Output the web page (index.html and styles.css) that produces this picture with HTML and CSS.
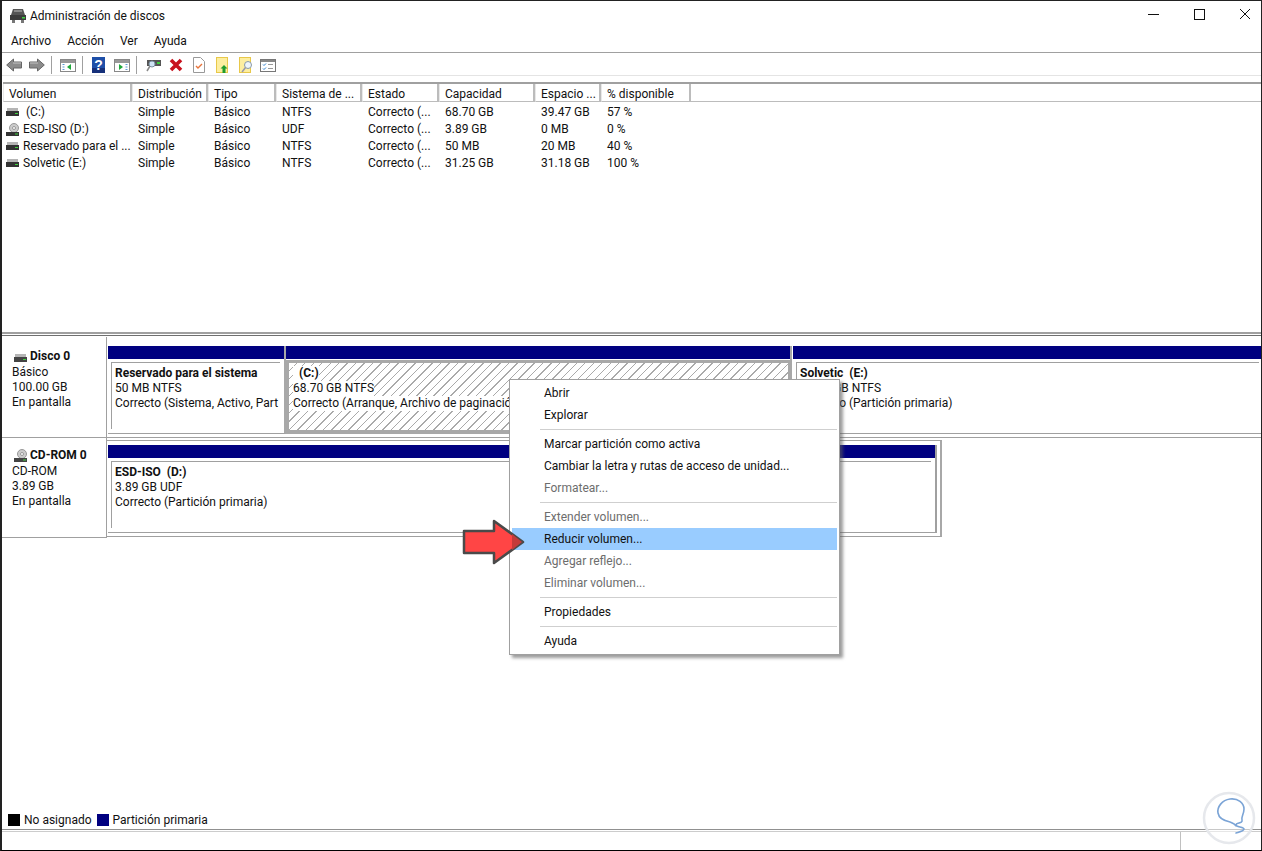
FILE: index.html

```html
<!DOCTYPE html>
<html>
<head>
  <title>Administración de discos</title>
  <link rel="stylesheet" href="styles.css">
</head>
<body>
  <div class="window">
    <div class="titlebar">
      <svg class="appicon" width="18" height="16" viewBox="0 0 18 16">
        <path d="M4 1h10l2 6H2z" fill="#555"/>
        <rect x="5" y="2" width="8" height="2" fill="#8a8a8a"/>
        <rect x="1" y="7" width="16" height="5" fill="#3c3c3c"/>
        <rect x="13" y="9" width="3" height="1.5" fill="#3fd03f"/>
        <rect x="3" y="12" width="3" height="3" fill="#777"/>
        <rect x="12" y="12" width="3" height="3" fill="#777"/>
      </svg>
      <span class="title">Administración de discos</span>
      <div class="controls">
        <svg width="46" height="29" viewBox="0 0 46 29"><path d="M25 13.500h11" stroke="#111" fill="none"/></svg>
        <svg width="46" height="29" viewBox="0 0 46 29"><rect x="25.500" y="8.500" width="10" height="10" stroke="#111" fill="none"/></svg>
        <svg width="46" height="29" viewBox="0 0 46 29"><path d="M25 8l10 10M35 8L25 18" stroke="#111" fill="none"/></svg>
      </div>
    </div>

    <div class="menubar">
      <span>Archivo</span>
      <span>Acción</span>
      <span>Ver</span>
      <span>Ayuda</span>
    </div>

    <div class="toolbar">
      <svg class="tool m7" width="16" height="14" viewBox="0 0 16 14"><path d="M7.500 1L.7 7l6.800 6v-3h8V4h-8z" fill="#8c8c8c" stroke="#666"/><path d="M7 5h8" stroke="#c4c4c4"/></svg>
      <svg class="tool m6" width="16" height="14" viewBox="0 0 16 14"><path d="M8.500 1l6.800 6-6.800 6v-3h-8V4h8z" fill="#8c8c8c" stroke="#666"/><path d="M1 5h8" stroke="#c4c4c4"/></svg>
      <i class="tsep m8"></i>
      <svg class="tool m6" width="16" height="13" viewBox="0 0 16 13"><rect x=".5" y=".5" width="15" height="12" fill="#fff" stroke="#888"/><rect x="1" y="1" width="14" height="3" fill="#999"/><path d="M11 5v6L7 8z" fill="#1ea83c"/><path d="M2.500 5.500h2M2.500 8h2M2.500 10.500h2" stroke="#5a9bd5"/></svg>
      <i class="tsep m9"></i>
      <svg class="tool m9" width="13" height="16" viewBox="0 0 13 16"><rect width="13" height="16" fill="#1e4fa8"/><rect y="11" width="13" height="5" fill="#16307a"/><text x="6.500" y="13" class="qmark">?</text></svg>
      <svg class="tool m6" width="16" height="13" viewBox="0 0 16 13"><rect x=".5" y=".5" width="15" height="12" fill="#fff" stroke="#888"/><rect x="1" y="1" width="14" height="3" fill="#999"/><path d="M5 5v6l4-3z" fill="#1ea83c"/><path d="M11.500 5.500h2M11.500 8h2M11.500 10.500h2" stroke="#5a9bd5"/></svg>
      <i class="tsep m9"></i>
      <svg class="tool m8" width="15" height="14" viewBox="0 0 15 14"><rect x="1" y="2" width="14" height="6" fill="#555"/><rect x="11" y="4" width="3" height="2" fill="#3fd03f"/><circle cx="6" cy="6" r="3" fill="#cfe4f5" stroke="#7a8fa0"/><path d="M4 8l-3 5" stroke="#888" stroke-width="1.500"/></svg>
      <svg class="tool m10" width="14" height="14" viewBox="0 0 14 14"><path d="M2 2l10 10M12 2L2 12" stroke="#c8101c" stroke-width="3.600"/></svg>
      <svg class="tool m11" width="12" height="16" viewBox="0 0 12 16"><path d="M.5.500h7l4 4v11H.5z" fill="#fff" stroke="#999"/><path d="M3 9l2 2 4-4" stroke="#e8743b" stroke-width="1.400" fill="none"/></svg>
      <svg class="tool m11" width="12" height="16" viewBox="0 0 12 16"><rect x=".5" y=".5" width="11" height="15" fill="#fdeea0" stroke="#e8c84a"/><path d="M8 8l3.500 3.500H9.500V16h-3v-4.500h-2z" fill="#1f9c2e"/></svg>
      <svg class="tool m7" width="14" height="16" viewBox="0 0 14 16"><rect x=".5" y=".5" width="11" height="15" fill="#fdeea0" stroke="#e8c84a"/><circle cx="9" cy="8" r="3.500" fill="#eef5fb" stroke="#8899a8"/><path d="M6.500 10.500L3 15" stroke="#99a" stroke-width="1.500"/></svg>
      <svg class="tool" width="16" height="13" viewBox="0 0 16 13"><rect x=".5" y=".5" width="15" height="12" fill="#fff" stroke="#777"/><rect x="1" y="1" width="14" height="2" fill="#888"/><path d="M3 5.500l1 1 2-2M3 9.500l1 1 2-2" stroke="#2a7fd0" fill="none"/><path d="M8 5.500h5M8 9.500h5" stroke="#999"/></svg>
    </div>

    <div class="listpane">
      <div class="listhead">
        <span class="c1">Volumen</span>
        <span class="c2">Distribución</span>
        <span class="c3">Tipo</span>
        <span class="c4">Sistema de ...</span>
        <span class="c5">Estado</span>
        <span class="c6">Capacidad</span>
        <span class="c7">Espacio ...</span>
        <span class="c8">% disponible</span>
      </div>
      <div class="row">
        <span class="c1"><svg class="vol" width="13" height="14" viewBox="0 0 13 14"><rect x="1" y="2" width="11" height="3" fill="#b5b5b5"/><rect y="5" width="13" height="5" fill="#333"/><rect x="9" y="7" width="3" height="1" fill="#3fd03f"/></svg>&nbsp;(C:)</span>
        <span class="c2">Simple</span><span class="c3">Básico</span><span class="c4">NTFS</span><span class="c5">Correcto (...</span><span class="c6">68.70 GB</span><span class="c7">39.47 GB</span><span class="c8">57 %</span>
      </div>
      <div class="row">
        <span class="c1"><svg class="vol" width="13" height="14" viewBox="0 0 13 14"><circle cx="8" cy="5" r="4.500" fill="#ccc" stroke="#999"/><circle cx="8" cy="5" r="1.500" fill="#fff" stroke="#999"/><rect y="9" width="13" height="4" fill="#333"/><rect x="9" y="10.500" width="3" height="1" fill="#3fd03f"/></svg>ESD-ISO (D:)</span>
        <span class="c2">Simple</span><span class="c3">Básico</span><span class="c4">UDF</span><span class="c5">Correcto (...</span><span class="c6">3.89 GB</span><span class="c7">0 MB</span><span class="c8">0 %</span>
      </div>
      <div class="row">
        <span class="c1"><svg class="vol" width="13" height="14" viewBox="0 0 13 14"><rect x="1" y="2" width="11" height="3" fill="#b5b5b5"/><rect y="5" width="13" height="5" fill="#333"/><rect x="9" y="7" width="3" height="1" fill="#3fd03f"/></svg>Reservado para el ...</span>
        <span class="c2">Simple</span><span class="c3">Básico</span><span class="c4">NTFS</span><span class="c5">Correcto (...</span><span class="c6">50 MB</span><span class="c7">20 MB</span><span class="c8">40 %</span>
      </div>
      <div class="row">
        <span class="c1"><svg class="vol" width="13" height="14" viewBox="0 0 13 14"><rect x="1" y="2" width="11" height="3" fill="#b5b5b5"/><rect y="5" width="13" height="5" fill="#333"/><rect x="9" y="7" width="3" height="1" fill="#3fd03f"/></svg>Solvetic (E:)</span>
        <span class="c2">Simple</span><span class="c3">Básico</span><span class="c4">NTFS</span><span class="c5">Correcto (...</span><span class="c6">31.25 GB</span><span class="c7">31.18 GB</span><span class="c8">100 %</span>
      </div>
    </div>

    <div class="splitter"></div>

    <div class="diskpane">
      <div class="disk">
        <div class="disklabel">
          <b class="diskname"><svg width="18" height="10" viewBox="0 0 18 10"><rect x="3" y="0" width="11" height="3" fill="#b5b5b5"/><rect x="2" y="3" width="13" height="5" fill="#444"/><rect x="11" y="5" width="3" height="1" fill="#3fd03f"/></svg>Disco 0</b>
          <div>Básico</div>
          <div>100.00 GB</div>
          <div>En pantalla</div>
        </div>
        <div class="parts">
          <div class="part p-res">
            <div class="bar"></div>
            <div class="pbody">
              <b>Reservado para el sistema</b>
              <div>50 MB NTFS</div>
              <div>Correcto (Sistema, Activo, Part</div>
            </div>
          </div>
          <div class="part p-c">
            <div class="bar"></div>
            <div class="pbody hatch">
              <b>&nbsp;(C:)</b>
              <div>68.70 GB NTFS</div>
              <div>Correcto (Arranque, Archivo de paginación, Volcado, Partición primaria)</div>
            </div>
          </div>
          <div class="part p-e">
            <div class="bar"></div>
            <div class="pbody">
              <b>Solvetic&nbsp; (E:)</b>
              <div>31.25 GB NTFS</div>
              <div>Correcto (Partición primaria)</div>
            </div>
          </div>
        </div>
      </div>
      <div class="disk">
        <div class="disklabel">
          <b class="diskname"><svg width="18" height="14" viewBox="0 0 18 14"><circle cx="10" cy="5" r="4.500" fill="#ccc" stroke="#999"/><circle cx="10" cy="5" r="1.500" fill="#fff" stroke="#999"/><rect x="2" y="9" width="13" height="4" fill="#444"/><rect x="11" y="10.500" width="3" height="1" fill="#3fd03f"/></svg>CD-ROM 0</b>
          <div>CD-ROM</div>
          <div>3.89 GB</div>
          <div>En pantalla</div>
        </div>
        <div class="parts cdparts">
          <div class="part p-d">
            <div class="bar"></div>
            <div class="pbody">
              <b>ESD-ISO&nbsp; (D:)</b>
              <div>3.89 GB UDF</div>
              <div>Correcto (Partición primaria)</div>
            </div>
          </div>
        </div>
      </div>
    </div>

    <div class="legend">
      <i class="swatch black"></i><span>No asignado</span>
      <i class="swatch navy"></i><span>Partición primaria</span>
    </div>

    <div class="statusbar"><i class="statusdiv"></i></div>

    <div class="ctxmenu">
      <div class="mi">Abrir</div>
      <div class="mi">Explorar</div>
      <div class="msep"></div>
      <div class="mi">Marcar partición como activa</div>
      <div class="mi">Cambiar la letra y rutas de acceso de unidad...</div>
      <div class="mi off">Formatear...</div>
      <div class="msep"></div>
      <div class="mi off">Extender volumen...</div>
      <div class="mi on">Reducir volumen...</div>
      <div class="mi off">Agregar reflejo...</div>
      <div class="mi off">Eliminar volumen...</div>
      <div class="msep"></div>
      <div class="mi">Propiedades</div>
      <div class="msep"></div>
      <div class="mi">Ayuda</div>
    </div>

    <svg class="arrow" width="64" height="46" viewBox="0 0 64 46">
      <path d="M2 12h30V2l29 21-29 21V34H2z" fill="#ff4545" stroke="#4a4a4a" stroke-width="2.500" stroke-linejoin="round"/>
      <path d="M50 15l10 8-10 8z" fill="#c43a3a"/>
    </svg>

    <svg class="mark" width="56" height="56" viewBox="0 0 56 56">
      <circle cx="28" cy="28" r="25" fill="#fff" fill-opacity=".5" stroke="#e6e8ec" stroke-width="2.500"/>
      <path d="M35 43c3-1 8-2 8-4s-8-2-8-4c0-3 7-1 6-5-1-3 2-6 2-11 0-6-6-11-14-10-8 1-13 8-12 14 1 6 7 8 12 9 3 1 5 2 6 4" fill="none" stroke="#7ba4d6" stroke-width="1.600" stroke-linecap="round"/>
    </svg>
  </div>
</body>
</html>
```

FILE: styles.css

```css
* { box-sizing: border-box; }
html, body { margin: 0; padding: 0; }
body { width: 1262px; height: 851px; overflow: hidden; font-family: "Roboto", "Liberation Sans", sans-serif; font-size: 12px; color: #111; background: #fff; }

.window { position: relative; width: 1262px; height: 851px; display: flex; flex-direction: column; background: #fff; border: 1px solid #222; border-left-width: 2px; border-bottom-color: #000; overflow: hidden; }

.titlebar { display: flex; align-items: center; height: 29px; padding-left: 7px; flex: none; }
.appicon { margin-right: 3px; }
.title { font-size: 12px; }
.controls { display: flex; margin-left: auto; }

.menubar { display: flex; height: 23px; padding-left: 9px; gap: 16px; align-items: center; flex: none; border-bottom: 1px solid #a0a0a0; }

.toolbar { display: flex; align-items: center; height: 23px; padding: 2px 0 0 4px; flex: none; border-bottom: 1px solid #e4e4e4; }
.tool { flex: none; }
.tsep { width: 1px; height: 18px; background: #a0a0a0; flex: none; }
.m6 { margin-right: 6px; }
.m7 { margin-right: 7px; }
.m8 { margin-right: 8px; }
.m9 { margin-right: 9px; }
.m10 { margin-right: 10px; }
.m11 { margin-right: 11px; }
.qmark { font-family: "Liberation Sans", sans-serif; font-size: 14px; font-weight: bold; fill: #fff; text-anchor: middle; }

.listpane { flex: none; height: 250px; margin: 6px 0 0 1px; border-top: 2px solid #a0a0a0; }
.listhead { display: flex; height: 18px; margin-bottom: 2px; }
.listhead span { height: 18px; line-height: 20px; padding-left: 5px; border-right: 2px solid #bcbcbc; border-bottom: 1px solid #bcbcbc; border-left: 1px solid #e8e8e8; white-space: nowrap; overflow: hidden; }
.listhead::after { content: ""; flex: 1; border-bottom: 1px solid #bcbcbc; }
.row { display: flex; height: 17px; line-height: 17px; }
.row span { padding-left: 6px; white-space: nowrap; overflow: hidden; }
.c1 { width: 129px; }
.c2 { width: 76px; }
.c3 { width: 68px; }
.c4 { width: 86px; }
.c5 { width: 77px; }
.c6 { width: 96px; }
.c7 { width: 66px; }
.c8 { width: 90px; }
.row .c1 { padding-left: 3px; display: flex; align-items: center; gap: 4px; }
.vol { flex: none; }

.splitter { flex: none; height: 4px; background: #fff; border-top: 2px solid #a0a0a0; border-bottom: 1px solid #707070; }

.diskpane { flex: none; height: 470px; padding-top: 1px; }
.disk { display: flex; height: 101px; border-bottom: 1px solid #a0a0a0; }
.disk:last-child { height: 100px; border-bottom: 0; }
.disklabel { width: 105px; flex: none; padding: 12px 0 0 10px; line-height: 15px; border-right: 1px solid #a0a0a0; }
.disk:last-child .disklabel { padding-top: 10px; border-bottom: 1px solid #a0a0a0; }
.diskname { display: flex; align-items: flex-end; margin-bottom: 1px; }

.parts { display: flex; flex: 1; min-width: 0; padding: 9px 0 3px 1px; }
.part { display: flex; flex-direction: column; flex: none; }
.bar { height: 13px; background: #000080; flex: none; }
.pbody { flex: 1; margin: 3px 4px 4px 3px; padding: 3px 0 0 3px; line-height: 15px; border-top: 1px solid #a0a0a0; border-left: 1px solid #a0a0a0; overflow: hidden; white-space: nowrap; }
.p-res { width: 178px; border-right: 2px solid #a8a8a8; border-bottom: 1px solid #a0a0a0; }
.p-c { width: 506px; margin-right: 1px; border-right: 2px solid #a8a8a8; }
.p-e { flex: 1; min-width: 0; border-bottom: 1px solid #a0a0a0; }
.p-e .pbody { margin-right: 2px; }

.hatch { margin: 1px 0 0; border: 4px solid #a8a8a8; border-width: 3px 2px 4px 3px; padding: 3px 0 0 4px; background: repeating-linear-gradient(135deg, #fff 0 5px, #aaa 5px 6px); }
.hatch b, .hatch div { background: #fff; width: fit-content; }
.hatch b { display: block; padding-left: 3px; }

.cdparts { flex: none; width: 835px; height: 97px; margin-top: 2px; padding: 4px 3px 3px 1px; border-top: 1px solid #a0a0a0; border-right: 2px solid #a8a8a8; border-bottom: 1px solid #a0a0a0; }
.p-d { flex: 1; border-right: 2px solid #a0a0a0; border-bottom: 1px solid #a0a0a0; }

.legend { flex: none; display: flex; align-items: center; height: 22px; padding: 4px 0 0 6px; margin-top: auto; }
.swatch { width: 12px; height: 12px; margin-right: 4px; }
.swatch.black { background: #000; }
.swatch.navy { background: #000080; margin-left: 5px; }

.statusbar { flex: none; height: 21px; border-top: 1px solid #909090; box-shadow: inset 0 1px 0 #fff, inset 0 2px 0 #ccc; display: flex; justify-content: flex-end; }
.statusdiv { width: 1px; background: #c0c0c0; margin: 2px 80px 0 0; }

.ctxmenu { position: absolute; left: 507px; top: 378px; width: 331px; padding: 2px; background: #fff; border: 1px solid #a0a0a0; box-shadow: 3px 3px 3px rgba(90, 90, 90, .6); z-index: 5; }
.mi { height: 22px; line-height: 22px; padding-left: 32px; }
.mi.off { color: #6d6d6d; }
.mi.on { background: #99ccff; }
.msep { height: 7px; margin-left: 28px; padding-top: 3px; }
.msep::after { content: ""; display: block; height: 1px; background: #cfcfcf; }

.arrow { position: absolute; left: 460px; top: 518px; z-index: 6; }
.mark { position: absolute; left: 1199px; top: 789px; z-index: 6; }
```
